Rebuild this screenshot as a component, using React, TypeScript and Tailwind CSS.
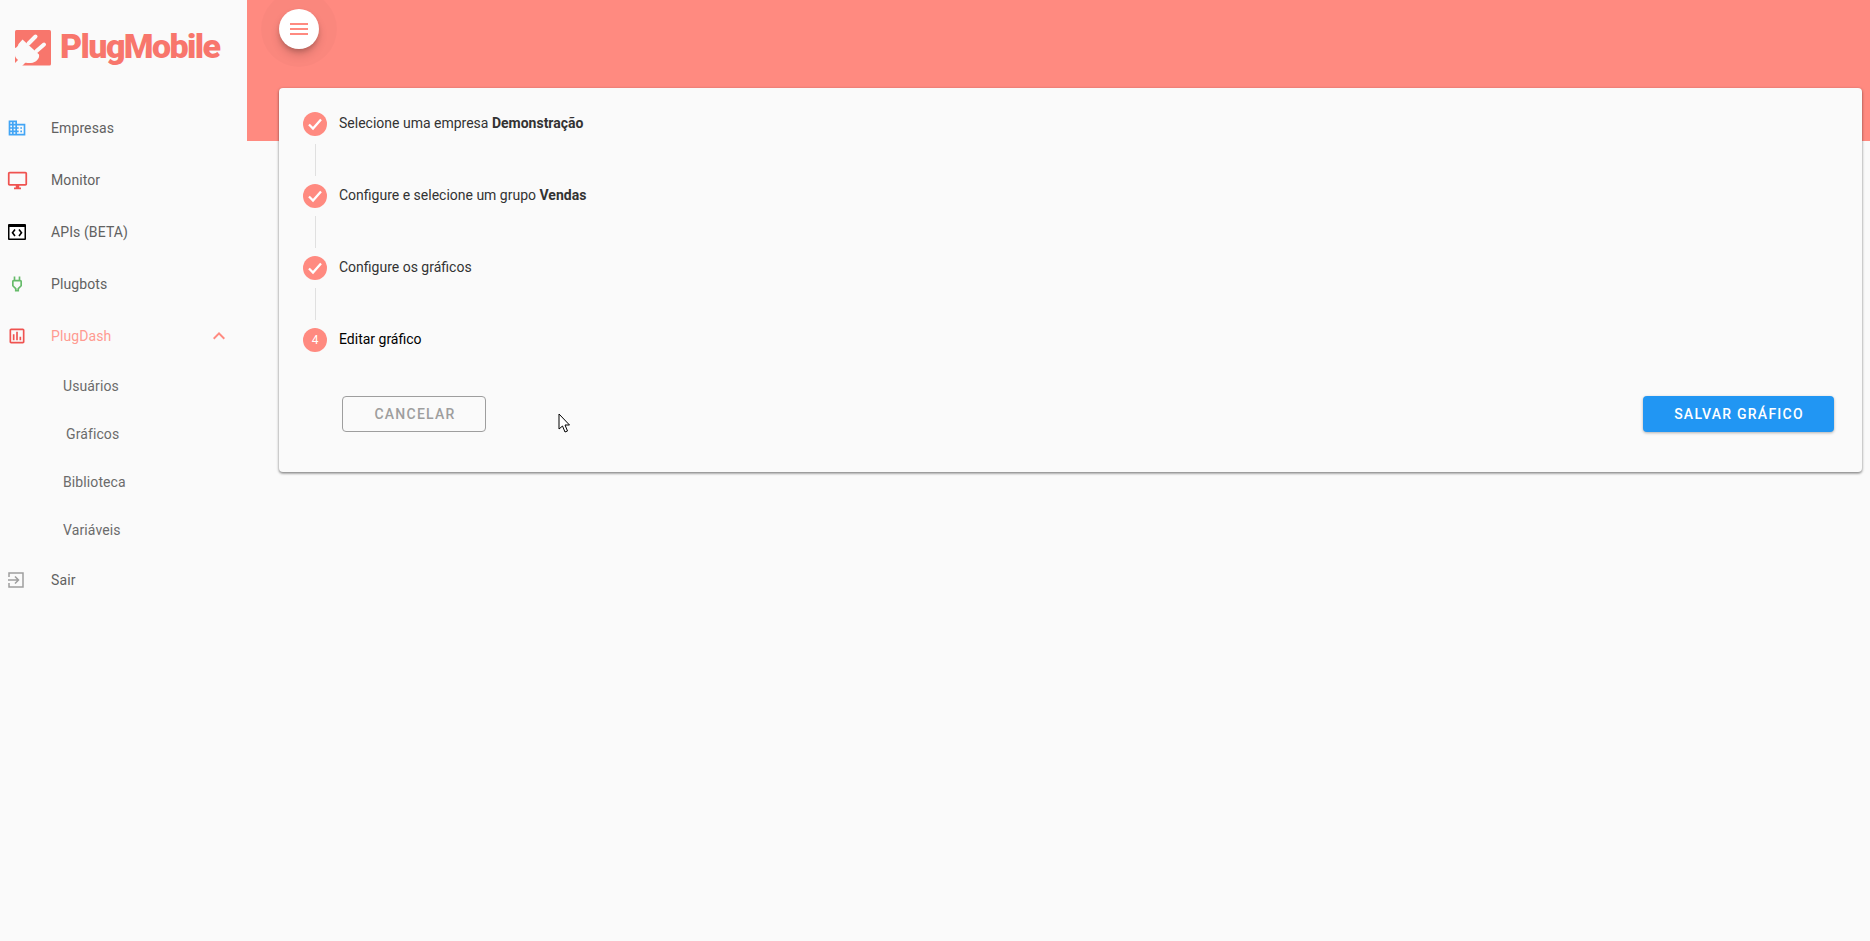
import React from "react";
import { MdDomain, MdOutlineDesktopWindows, MdOutlinePower, MdOutlineInsertChart, MdExpandLess } from "react-icons/md";

function Logo() {
  return (
    <div className="h-[102px] flex items-start pl-[15px] pt-[30px] gap-[9px]">
      <svg width="36" height="36" viewBox="0 0 36 36" className="shrink-0">
        <rect width="36" height="35.5" rx="1.5" fill="#f8766c" />
        <path fill="#fafafa" d="M7.5 9.5 24 24.5c1 4-3 8-8 8.5-3 .4-5-1-6 0l-3 3H0v-3l3-3c-.6-1.2-3-2-3-5v-7c2-.5 3-2 3.500-4z" />
        <path d="M13.500 13.500 20.500 6.500M21.500 21 29 14.500" stroke="#fafafa" strokeWidth="4" strokeLinecap="round" fill="none" />
      </svg>
      <span className="font-['Roboto',sans-serif] font-black text-[34px] leading-[32px] tracking-[-1.6px] text-[#f8766c]">PlugMobile</span>
    </div>
  );
}

function CodeBox() {
  return (
    <svg width="18" height="16" viewBox="0 0 18 16">
      <rect x="0" y="0" width="18" height="16" rx="1" fill="#000" />
      <rect x="1.5" y="3" width="15" height="11.5" fill="#fff" />
      <path d="M7 5.500 4.500 8.700 7 12M11 5.500l2.500 3.200L11 12" fill="none" stroke="#000" strokeWidth="1.6" />
    </svg>
  );
}

function ExitIcon() {
  return (
    <svg width="16" height="16" viewBox="0 0 16 16" fill="none" stroke="#9e9e9e" strokeWidth="1.5">
      <path d="M1 5V1h14v14H1v-4" />
      <path d="M0 8h10.500M7 4.500 10.500 8 7 11.500" />
    </svg>
  );
}

function NavItem({ icon, label, active, chevron }: { icon: React.ReactNode; label: string; active?: boolean; chevron?: boolean }) {
  return (
    <div className="h-[52px] flex items-center">
      <div className="w-[51px] pl-[8px] shrink-0 flex items-center">{icon}</div>
      <span className={active ? "text-[#ff9a91] tracking-[0.1px]" : "text-[#616161] tracking-[0.1px]"}>{label}</span>
      {chevron && <MdExpandLess size={24} className="ml-auto mr-[16px] text-[#ff8a80]" />}
    </div>
  );
}

function SubItem({ label, pad }: { label: string; pad: string }) {
  return <div className={`h-[48px] flex items-center text-[#6b6b6b] tracking-[0.1px] ${pad}`}>{label}</div>;
}

function Step({ n, children, last }: { n?: number; children: React.ReactNode; last?: boolean }) {
  return (
    <div className="flex flex-col">
      <div className="flex items-center h-[24px]">
        <div className="w-[24px] h-[24px] rounded-full bg-[#ff8a80] text-white flex items-center justify-center text-[12px] shrink-0">
          {n ? n : (
            <svg width="16" height="16" viewBox="0 0 16 16" fill="none" stroke="#fff" strokeWidth="2.300">
              <path d="M2 8.500 6 12.500 14 3.500" />
            </svg>
          )}
        </div>
        <div className={`ml-[12px] pb-[2px] ${n ? "text-black" : "text-[#333]"}`}>{children}</div>
      </div>
      {!last && <div className="ml-[11.5px] w-px h-[32px] my-[8px] bg-[#e0e0e0]" />}
    </div>
  );
}

export default function App() {
  return (
    <div className="min-h-[941px] flex bg-[#fafafa] font-['Roboto',sans-serif] text-[14px] relative overflow-hidden">
      <aside className="w-[247px] shrink-0">
        <Logo />
        <nav>
          <NavItem icon={<MdDomain size={20} className="text-[#42a5f5] -ml-[1px]" />} label="Empresas" />
          <NavItem icon={<MdOutlineDesktopWindows size={21} className="text-[#ef5350] -ml-[1px]" />} label="Monitor" />
          <NavItem icon={<CodeBox />} label="APIs (BETA)" />
          <NavItem icon={<MdOutlinePower size={20} className="text-[#66bb6a] -ml-[1px]" />} label="Plugbots" />
          <NavItem icon={<MdOutlineInsertChart size={20} className="text-[#ef5350] -ml-[1px]" />} label="PlugDash" active chevron />
          <SubItem label="Usuários" pad="pl-[63px]" />
          <SubItem label="Gráficos" pad="pl-[66px]" />
          <SubItem label="Biblioteca" pad="pl-[63px]" />
          <SubItem label="Variáveis" pad="pl-[63px]" />
          <NavItem icon={<ExitIcon />} label="Sair" />
        </nav>
      </aside>
      <main className="flex-1 min-w-0">
        <header className="h-[141px] bg-[#ff8a80] pl-[32px] pt-[9px]">
          <div className="relative w-[40px] h-[40px]">
            <div className="absolute -inset-[18px] rounded-full bg-black/[0.02]" />
            <button className="relative w-[40px] h-[40px] rounded-full bg-white flex flex-col items-center justify-center gap-[3px] shadow-[0_3px_5px_-1px_rgba(0,0,0,0.2),0_6px_10px_0_rgba(0,0,0,0.14)]">
              <span className="block w-[18px] h-[2px] bg-[#ff8a80]" />
              <span className="block w-[18px] h-[2px] bg-[#ff8a80]" />
              <span className="block w-[18px] h-[2px] bg-[#ff8a80]" />
            </button>
          </div>
        </header>
        <section className="relative -mt-[53px] ml-[32px] mr-[8px] h-[384px] rounded-[4px] bg-[#fafafa] shadow-[0_1px_3px_rgba(0,0,0,0.45),0_2px_2px_rgba(0,0,0,0.12)] pt-[24px] px-[24px]">
          <Step>Selecione uma empresa <b className="font-bold">Demonstração</b></Step>
          <Step>Configure e selecione um grupo <b className="font-bold">Vendas</b></Step>
          <Step>Configure os gráficos</Step>
          <Step n={4} last>Editar gráfico</Step>
          <div className="flex justify-between pl-[39px] pr-[4px] mt-[44px]">
            <button className="w-[144px] h-[36px] pl-[2px] rounded-[4px] border border-[#9e9e9e] text-[#9e9e9e] font-medium text-[14px] tracking-[1.25px]">CANCELAR</button>
            <button className="w-[191px] h-[36px] pl-[1px] rounded-[4px] bg-[#2196f3] text-white font-medium text-[14px] tracking-[1.25px] shadow-[0_1px_3px_rgba(0,0,0,0.3)]">SALVAR GRÁFICO</button>
          </div>
        </section>
      </main>
      <svg width="13" height="20" viewBox="0 0 13 20" className="absolute left-[558px] top-[413px]">
        <path d="M1 1v15l3.500-3 2.500 6 2.500-1-2.500-6h4.500z" fill="#fff" stroke="#000" strokeWidth="1" />
      </svg>
    </div>
  );
}
